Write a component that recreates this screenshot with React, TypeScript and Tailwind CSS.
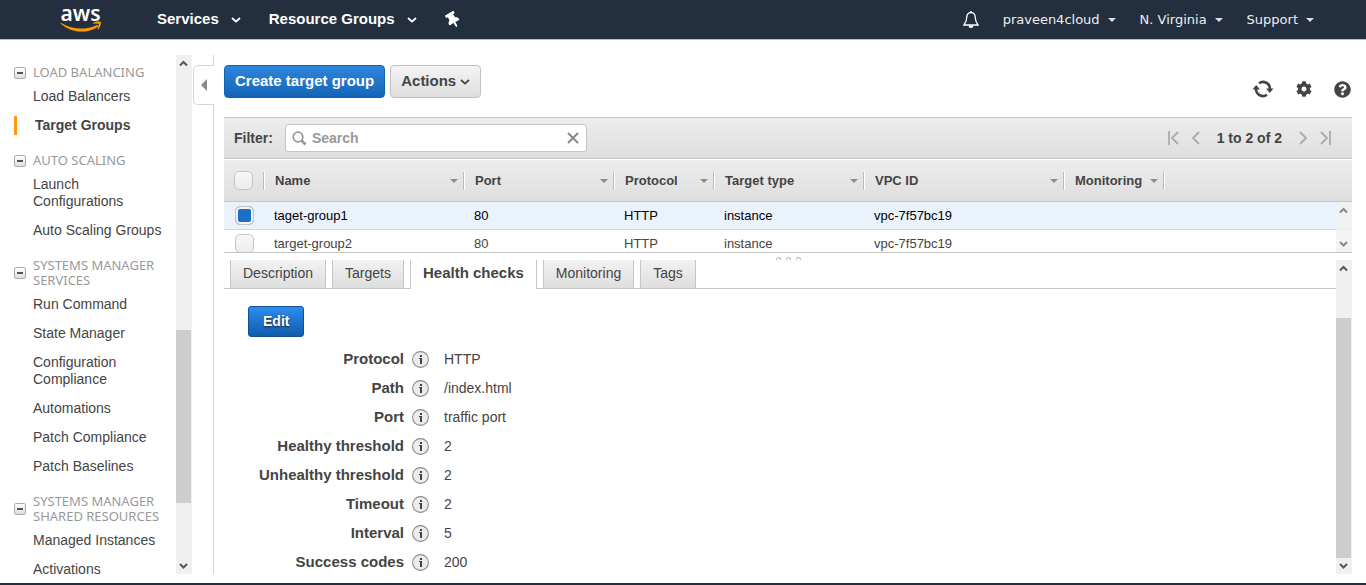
import { useState } from "react";
import { FaCog, FaQuestionCircle, FaThumbtack } from "react-icons/fa";

const sections = [
    { title: ["LOAD BALANCING"], items: ["Load Balancers", "Target Groups"] },
    { title: ["AUTO SCALING"], items: ["Launch Configurations", "Auto Scaling Groups"] },
    {
        title: ["SYSTEMS MANAGER", "SERVICES"],
        items: ["Run Command", "State Manager", "Configuration Compliance", "Automations", "Patch Compliance", "Patch Baselines"],
    },
    { title: ["SYSTEMS MANAGER", "SHARED RESOURCES"], items: ["Managed Instances", "Activations"] },
];

const columns = [
    { label: "Name", width: "w-[200px]" },
    { label: "Port", width: "w-[150px]" },
    { label: "Protocol", width: "w-[100px]" },
    { label: "Target type", width: "w-[150px]" },
    { label: "VPC ID", width: "w-[200px]" },
    { label: "Monitoring", width: "w-[100px]" },
];

const groups = [
    { name: "taget-group1", port: "80", protocol: "HTTP", type: "instance", vpc: "vpc-7f57bc19" },
    { name: "target-group2", port: "80", protocol: "HTTP", type: "instance", vpc: "vpc-7f57bc19" },
];

const tabs = ["Description", "Targets", "Health checks", "Monitoring", "Tags"];

const healthChecks = [
    ["Protocol", "HTTP"],
    ["Path", "/index.html"],
    ["Port", "traffic port"],
    ["Healthy threshold", "2"],
    ["Unhealthy threshold", "2"],
    ["Timeout", "2"],
    ["Interval", "5"],
    ["Success codes", "200"],
];

function Caret({ className }: { className: string }) {
    return (
        <svg className={className} width="8" height="4" viewBox="0 0 8 4" fill="currentColor">
            <path d="M0 0h8L4 4z" />
        </svg>
    );
}

function Chevron() {
    return (
        <svg width="10" height="6" viewBox="0 0 10 6" fill="none" stroke="currentColor" strokeWidth="1.8">
            <path d="M1 1l4 3.6L9 1" />
        </svg>
    );
}

function ScrollArrow({ up, className }: { up?: boolean; className: string }) {
    return (
        <svg className={className} width="16" height="16" viewBox="0 0 16 16" fill="none" stroke="currentColor" strokeWidth="2">
            <path d={up ? "M4 10.5l3.5-3.5L11 10.5" : "M4 6l3.5 3.5L11 6"} />
        </svg>
    );
}

function AwsLogo() {
    return (
        <svg className="block overflow-visible" width="44" height="28" viewBox="0 0 44 28" role="img" aria-label="aws">
            <text x="20.500" y="14.500" textAnchor="middle" fill="#fff" fontSize="21" fontWeight="600" fontFamily="'Noto Sans', 'Open Sans', sans-serif">aws</text>
            <path d="M1.200 17c11.500 6.800 24 7.200 35.500 2.200 1.400-.5 2.400.8 1.100 1.700C27 28 11.500 27.200.8 17.700c-.5-.5-.1-1 .4-.7z" fill="#f90" />
            <path d="M33.200 17c2.500-1.800 7-1.700 7.600-1 .6.900-.3 5.400-2.700 7.400-.5.300-.8.100-.6-.4.600-1.500 1.700-4.400 1.200-5-.5-.7-3.500-.4-5-.2-.5 0-.9-.4-.5-.8z" fill="#f90" />
        </svg>
    );
}

function BellIcon() {
    return (
        <svg width="16" height="18" viewBox="0 0 16 18" fill="none" stroke="#fff" strokeWidth="1.300">
            <path d="M8 1.500c-2.800 0-4.200 2-4.200 4.500 0 4-.8 5.500-2.800 8h14c-2-2.500-2.800-4-2.800-8C12.200 3.500 10.800 1.500 8 1.500z" />
            <path d="M8 0v2" />
            <path d="M5.800 14.500h4.400A2.200 2.200 0 018 17a2.200 2.200 0 01-2.200-2.500z" fill="#fff" stroke="none" />
        </svg>
    );
}

function RefreshIcon() {
    return (
        <svg width="22" height="18" viewBox="0 0 22 18" fill="none" stroke="currentColor" strokeWidth="2.600">
            <path d="M7 3.200A7 7 0 0118 9" />
            <path d="M15 14.800A7 7 0 014 9" />
            <path d="M14 8.500h7.500L17.800 13z" fill="currentColor" stroke="none" />
            <path d="M.5 9.500H8L4.200 5z" fill="currentColor" stroke="none" />
        </svg>
    );
}

function InfoIcon() {
    return (
        <svg width="17" height="17" viewBox="0 0 17 17">
            <circle cx="8.500" cy="8.500" r="7.900" fill="#ececec" stroke="#8c8c8c" strokeWidth="1.100" />
            <path d="M8 4h2v2H8zM7 7h3v6H8V8H7z" fill="#444" />
        </svg>
    );
}

function CheckBox({ label, checked, onChange }: { label: string; checked: boolean; onChange: () => void }) {
    return (
        <input
            type="checkbox"
            aria-label={label}
            checked={checked}
            onChange={onChange}
            className="block h-[19px] w-[19px] appearance-none rounded-[5px] border border-[#c4c4c4] bg-gradient-to-b from-[#f7f7f7] to-[#ececec] checked:bg-none checked:bg-[#1b6fc8] checked:shadow-[inset_0_0_0_2px_#f4f4f4]"
        />
    );
}

function HeaderMenu({ label }: { label: string }) {
    return (
        <button className="flex items-center gap-2 text-[#eee]">
            {label}
            <Caret className="text-[#ddd]" />
        </button>
    );
}

function Sidebar() {
    return (
        <div className="flex w-48 shrink-0 overflow-hidden">
            <nav className="flex-1 overflow-hidden pt-[10px] pl-[14px]">
                {sections.map((section, i) => (
                    <div key={i} className="pb-[19px]">
                        <div className="flex items-center gap-[7px] font-['Noto_Sans',sans-serif] text-[13px] leading-[15px] text-[#999]">
                            <button aria-label="Collapse section" className="flex h-3 w-3 shrink-0 items-center justify-center rounded-[2px] border border-[#aaa] bg-gradient-to-b from-white to-[#ddd]">
                                <span className="h-[2px] w-[6px] bg-[#555]" />
                            </button>
                            <h2>
                                {section.title.map((line) => <span key={line} className="block whitespace-nowrap">{line}</span>)}
                            </h2>
                        </div>
                        <ul className="flex flex-col gap-3 pt-2 text-[14px] leading-[17px]">
                            {section.items.map((item) =>
                                item === "Target Groups" ? (
                                    <li key={item} className="flex items-center">
                                        <span className="-my-px mr-[18px] h-[19px] w-[3px] bg-[#ff9914]" />
                                        <a href="#" className="font-bold">{item}</a>
                                    </li>
                                ) : (
                                    <li key={item} className="pl-[19px]">
                                        <a href="#" className={item.includes("Configuration") ? "block w-[100px]" : "block"}>{item}</a>
                                    </li>
                                )
                            )}
                        </ul>
                    </div>
                ))}
            </nav>
            <div className="flex w-4 shrink-0 flex-col bg-[#f0f0f0] text-[#555]">
                <ScrollArrow up className="shrink-0" />
                <div className="flex-[259]" />
                <div className="mr-px flex-[173] bg-[#cdcdcd]" />
                <div className="flex-[55]" />
                <ScrollArrow className="shrink-0" />
            </div>
        </div>
    );
}

export default function App() {
    const [selected, setSelected] = useState([true, false]);
    const [activeTab, setActiveTab] = useState("Health checks");
    const [search, setSearch] = useState("");

    const toggle = (index: number) => {
        setSelected(selected.map((value, i) => (i === index ? !value : value)));
    }

    const toggleAll = () => {
        const all = selected.every(Boolean);
        setSelected(selected.map(() => !all));
    }

    return (
        <div className="flex h-screen flex-col overflow-hidden border-b-2 border-[#232f3e] bg-white font-['Liberation_Sans',Arial,sans-serif] text-[14px] text-[#444]">
            <header className="flex h-10 shrink-0 items-center border-b border-[#b8bcc4] bg-[#232f3e] pr-[52px] pl-[60px] text-white">
                <a href="#"><AwsLogo /></a>
                <div className="flex flex-1 items-center pl-[53px] text-[15px] font-bold [text-shadow:0_1px_1px_#000]">
                    <button className="flex items-center gap-3">Services <Chevron /></button>
                    <button className="ml-7 flex items-center gap-3">Resource Groups <Chevron /></button>
                    <button aria-label="Pin" className="ml-[30px]"><FaThumbtack className="h-4 w-3 -rotate-30" /></button>
                </div>
                <div className="flex items-center gap-6 font-['DejaVu_Sans',Verdana,sans-serif] text-[13px]">
                    <button aria-label="Notifications"><BellIcon /></button>
                    <HeaderMenu label="praveen4cloud" />
                    <HeaderMenu label="N. Virginia" />
                    <HeaderMenu label="Support" />
                </div>
            </header>

            <div className="flex min-h-0 flex-1 pt-[15px] pr-[14px] pb-[9px]">
                <Sidebar />
                <div className="flex w-[22px] shrink-0 flex-col">
                    <div className="h-[10px] border-r border-[#d5d5d5]" />
                    <button aria-label="Hide navigation" className="ml-px flex h-10 items-center justify-center rounded-l-[5px] border border-r-0 border-[#d5d5d5]">
                        <svg width="6" height="12" viewBox="0 0 6 12" fill="#888"><path d="M6 0v12L0 6z" /></svg>
                    </button>
                    <div className="flex-1 border-r border-[#d5d5d5]" />
                </div>

                <main className="flex min-w-0 flex-1 flex-col pl-[10px]">
                    <div className="flex h-[62px] shrink-0 items-start gap-[5px] pt-[10px] font-bold">
                        <button className="h-[33px] rounded-[4px] border border-[#1461ae] bg-gradient-to-b from-[#2e86dd] to-[#1465b7] px-[10px] text-[15px] text-white">Create target group</button>
                        <button className="flex h-[33px] items-center gap-1 rounded-[4px] border border-[#c0c0c0] bg-gradient-to-b from-[#f4f4f4] to-[#dedede] px-[10px] text-[15px]">
                            Actions
                            <Chevron />
                        </button>
                        <div className="flex flex-1 items-center justify-end gap-[22px] pt-[15px] pr-px">
                            <button aria-label="Refresh"><RefreshIcon /></button>
                            <button aria-label="Settings"><FaCog className="h-4 w-4" /></button>
                            <button aria-label="Help"><FaQuestionCircle className="h-[17px] w-[17px]" /></button>
                        </div>
                    </div>

                    <div className="flex h-[42px] shrink-0 items-center border-y border-[#c6c6c6] bg-gradient-to-b from-[#ededed] to-[#dedede] pr-5 pl-[10px] font-bold">
                        <label htmlFor="filter" className="mr-3">Filter:</label>
                        <div className="flex h-7 w-[302px] items-center rounded-[3px] border border-[#c6c6c6] bg-white px-[6px]">
                            <svg width="15" height="15" viewBox="0 0 15 15" fill="none" stroke="#999">
                                <circle cx="6" cy="6" r="4.800" strokeWidth="1.800" />
                                <path d="M9.500 9.500l4 4" strokeWidth="2.600" />
                            </svg>
                            <input
                                id="filter"
                                value={search}
                                onChange={(e) => setSearch(e.target.value)}
                                placeholder="Search"
                                className="min-w-0 flex-1 pl-[5px] outline-none placeholder:text-[#999]"
                            />
                            <button aria-label="Clear" onClick={() => setSearch("")}>
                                <svg width="14" height="12" viewBox="0 0 14 12" stroke="#888" strokeWidth="2"><path d="M2 1l10 10M12 1L2 11" /></svg>
                            </button>
                        </div>
                        <div className="flex flex-1 items-center justify-end text-[#aaa]">
                            <button aria-label="First page">
                                <svg width="12" height="14" viewBox="0 0 12 14" fill="none" stroke="currentColor" strokeWidth="1.800"><path d="M2 0v14M11 1L5 7l6 6" /></svg>
                            </button>
                            <button aria-label="Previous page" className="ml-3">
                                <svg width="10" height="14" viewBox="0 0 10 14" fill="none" stroke="currentColor" strokeWidth="1.800"><path d="M8 1L2 7l6 6" /></svg>
                            </button>
                            <span className="mx-4 text-[#444]">1 to 2 of 2</span>
                            <button aria-label="Next page">
                                <svg width="10" height="14" viewBox="0 0 10 14" fill="none" stroke="currentColor" strokeWidth="1.800"><path d="M2 1l6 6-6 6" /></svg>
                            </button>
                            <button aria-label="Last page" className="ml-3">
                                <svg width="12" height="14" viewBox="0 0 12 14" fill="none" stroke="currentColor" strokeWidth="1.800"><path d="M1 1l6 6-6 6M10 0v14" /></svg>
                            </button>
                        </div>
                    </div>

                    <div className="relative h-[94px] shrink-0 overflow-hidden border-b border-[#c6c6c6]">
                        <table className="w-full table-fixed border-separate border-spacing-0 text-left text-[13px]">
                            <thead>
                                <tr className="bg-gradient-to-b from-[#ededed] to-[#dedede]">
                                    <th className="h-[43px] w-10 border-t border-b border-t-white border-b-[#c6c6c6] pl-[10px]">
                                        <CheckBox label="Select all" checked={selected.every(Boolean)} onChange={toggleAll} />
                                    </th>
                                    {columns.map((column) => (
                                        <th key={column.label} className={`${column.width} border-t border-b border-t-white border-b-[#c6c6c6] p-0`}>
                                            <div className="-ml-px flex h-[18px] items-center justify-between border-l border-[#bbb] pr-[6px] pl-[11px] shadow-[inset_1px_0_0_#fff]">
                                                {column.label}
                                                <Caret className="text-[#8c8c8c]" />
                                            </div>
                                        </th>
                                    ))}
                                    <th className="border-t border-b border-t-white border-b-[#c6c6c6] p-0">
                                        <div className="-ml-px h-[18px] border-l border-[#bbb] shadow-[inset_1px_0_0_#fff]" />
                                    </th>
                                </tr>
                            </thead>
                            <tbody>
                                {groups.map((group, i) => (
                                    <tr key={group.name} className={selected[i] ? "bg-[#eaf2fe] text-black" : "text-[#444]"}>
                                        <td className="h-7 border-b border-[#d5d5d5] py-0 pr-0 pl-[11px]">
                                            <CheckBox label={group.name} checked={selected[i]} onChange={() => toggle(i)} />
                                        </td>
                                        <td className="border-b border-[#d5d5d5] py-0 pl-[10px]">{group.name}</td>
                                        <td className="border-b border-[#d5d5d5] py-0 pl-[10px]">{group.port}</td>
                                        <td className="border-b border-[#d5d5d5] py-0 pl-[10px]">{group.protocol}</td>
                                        <td className="border-b border-[#d5d5d5] py-0 pl-[10px]">{group.type}</td>
                                        <td className="border-b border-[#d5d5d5] py-0 pl-[10px]">{group.vpc}</td>
                                        <td className="border-b border-[#d5d5d5]" colSpan={2} />
                                    </tr>
                                ))}
                            </tbody>
                        </table>
                        <div className="absolute right-0 bottom-0 flex h-[50px] w-4 flex-col justify-between bg-[#f0f0f0]/80 text-[#888]">
                            <ScrollArrow up className="" />
                            <ScrollArrow className="" />
                        </div>
                    </div>

                    <div className="flex h-[7px] shrink-0 items-end justify-center gap-[5px]">
                        {[0, 1, 2].map((dot) => (
                            <span key={dot} className="h-[3px] w-[5px] rounded-t-[3px] border border-b-0 border-[#bbb]" />
                        ))}
                    </div>

                    <div className="flex min-h-0 flex-1">
                        <div className="min-w-0 flex-1 overflow-hidden">
                            <div role="tablist" className="flex h-[29px]">
                                <div className="w-[6px] border-b border-[#c6c6c6]" />
                                {tabs.map((tab) => (
                                    <div key={tab} className="flex">
                                        <button
                                            role="tab"
                                            aria-selected={tab === activeTab}
                                            onClick={() => setActiveTab(tab)}
                                            className={
                                                tab === activeTab
                                                    ? "border-x border-[#c6c6c6] px-3 pb-[2px] text-[15px] font-bold"
                                                    : "border-x border-b border-[#c6c6c6] bg-gradient-to-b from-[#f2f2f2] to-[#dedede] px-3 pb-[1px]"
                                            }
                                        >
                                            {tab}
                                        </button>
                                        <div className="w-[6px] border-b border-[#c6c6c6]" />
                                    </div>
                                ))}
                                <div className="flex-1 border-b border-[#c6c6c6]" />
                            </div>
                            <div className="pt-[17px] pl-6">
                                <button className="h-[31px] rounded-[3px] border border-[#114f91] bg-gradient-to-b from-[#2e8cf0] to-[#0f5cac] px-[14px] font-bold text-white [text-shadow:0_1px_2px_#222]">Edit</button>
                                <dl className="pt-2">
                                    {healthChecks.map(([label, value]) => (
                                        <div key={label} className="flex h-[29px] items-center">
                                            <dt className="w-[156px] text-right text-[15px] font-bold">{label}</dt>
                                            <dd className="flex items-center">
                                                <button aria-label={`About ${label}`} className="mr-[15px] ml-2"><InfoIcon /></button>
                                                {value}
                                            </dd>
                                        </div>
                                    ))}
                                </dl>
                            </div>
                        </div>
                        <div className="flex w-4 shrink-0 flex-col bg-[#f0f0f0] text-[#555]">
                            <ScrollArrow up className="shrink-0" />
                            <div className="flex-[42]" />
                            <div className="mr-px flex-[240] bg-[#cdcdcd]" />
                            <ScrollArrow className="shrink-0" />
                        </div>
                    </div>
                </main>
            </div>
        </div>
    );
}
